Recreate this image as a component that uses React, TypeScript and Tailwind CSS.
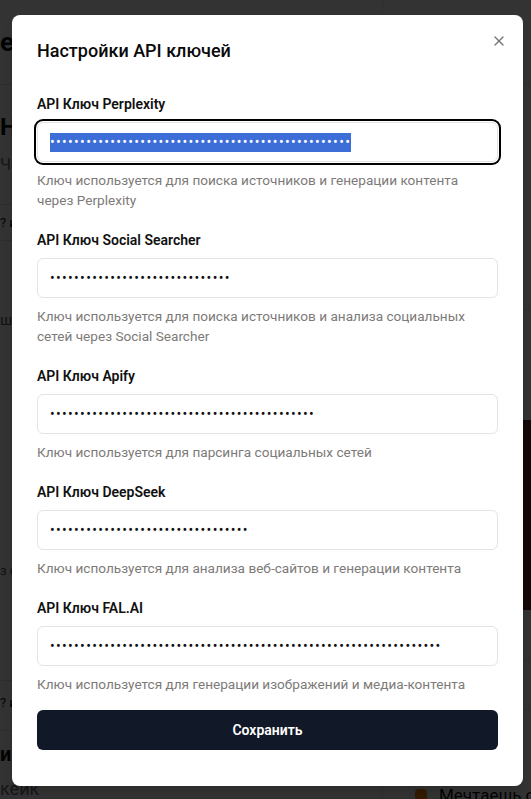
import { X } from 'lucide-react'

const keys = [
  {
    label: 'API Ключ Perplexity',
    dots: 50,
    hint: 'Ключ используется для поиска источников и генерации контента через Perplexity',
    focused: true,
  },
  {
    label: 'API Ключ Social Searcher',
    dots: 30,
    hint: 'Ключ используется для поиска источников и анализа социальных сетей через Social Searcher',
  },
  { label: 'API Ключ Apify', dots: 44, hint: 'Ключ используется для парсинга социальных сетей' },
  { label: 'API Ключ DeepSeek', dots: 33, hint: 'Ключ используется для анализа веб-сайтов и генерации контента' },
  { label: 'API Ключ FAL.AI', dots: 65, hint: 'Ключ используется для генерации изображений и медиа-контента' },
]

// page behind the dialog, only the edges show
function Backdrop() {
  return (
    <div className="grid h-full grid-cols-[383px_1fr] text-[#111]">
      <div className="flex flex-col border-r border-gray-200">
        <div className="flex h-[85px] items-center border-b border-gray-200 text-[26px] font-bold">ен</div>
        <div className="flex h-[120px] flex-col justify-center gap-3 border-b border-gray-200">
          <div className="text-[24px] font-bold leading-7">Н</div>
          <div className="text-[16px] text-gray-500">Че</div>
        </div>
        <div className="h-[36px] border-b border-gray-200 pt-2 text-[13px]">? и</div>
        <div className="h-[320px] pt-[68px] text-[15px] text-gray-600">ш</div>
        <div className="h-[120px] border-b border-gray-200 text-[13px] text-gray-600">з о</div>
        <div className="h-[50px] border-b border-gray-200 pt-3 text-[13px]">? и</div>
        <div className="h-[36px] pt-2 text-[20px] font-bold">из</div>
        <div className="pt-2 text-[18px] text-gray-500">кейк</div>
      </div>
      <div className="flex flex-col pl-3">
        <div className="flex h-[85px] items-center justify-end border-b border-gray-200 pr-1 text-[22px] font-bold">?</div>
        <div className="h-[135px]" />
        <div className="h-[90px] border-b border-gray-200 text-right text-[15px]">к</div>
        <div className="h-[110px] text-right text-[15px] leading-[22px]">
          <div>к</div>
          <div>а</div>
          <div>т</div>
          <div>ы</div>
        </div>
        <div className="h-[190px] bg-[#6b2a2a]" />
        <div className="h-[50px] border-b border-gray-200 pt-4 text-right text-[15px]">а</div>
        <div className="h-[50px] border-b border-gray-200 pt-3 text-right text-[15px]">к</div>
        <div className="h-[75px]" />
        <div className="flex items-center gap-3 whitespace-nowrap pl-5 text-[17px] leading-5">
          <span className="h-3 w-3 shrink-0 rounded-sm bg-orange-400" />
          Мечтаешь о вкусном
        </div>
      </div>
    </div>
  )
}

function KeyField({ label, dots, hint, focused }: { label: string; dots: number; hint: string; focused?: boolean }) {
  return (
    <div className="flex flex-col">
      <label className="text-[14px] font-semibold leading-5 text-[#111]">{label}</label>
      <div
        className={
          'mt-2 flex h-10 items-center rounded-md border border-[#e4e4e7] bg-white px-3 ' +
          (focused ? 'ring-2 ring-black ring-offset-1' : '')
        }
      >
        <span
          className={
            'text-[14px] leading-[19px] tracking-[1.3px] ' + (focused ? 'bg-[#3d6ed8] text-white' : 'text-[#111]')
          }
        >
          {'•'.repeat(dots)}
        </span>
      </div>
      <p className="mt-2 max-w-[440px] text-[13.6px] leading-5 text-[#7d7a78]">{hint}</p>
    </div>
  )
}

export default function App() {
  return (
    <div className="relative h-[799px] w-[531px] overflow-hidden bg-white font-['Roboto','Liberation_Sans',sans-serif]">
      <Backdrop />
      <div className="absolute inset-0 bg-black/80" />
      <div className="absolute left-[12px] top-[15px] w-[511px] rounded-lg bg-white px-[25px] pb-9 pt-[22px] shadow-lg">
        <h2 className="text-[18px] font-medium leading-7 text-[#0a0a0a]">Настройки API ключей</h2>
        <button className="absolute right-[16px] top-[18px] text-[#555] opacity-80">
          <X size={16} strokeWidth={2} />
        </button>
        <div className="mt-[29px] flex flex-col gap-5">
          {keys.map((k) => (
            <KeyField key={k.label} {...k} />
          ))}
        </div>
        <button className="mt-4 flex h-10 w-full items-center justify-center rounded-md bg-[#111827] text-[14px] font-semibold text-white">
          Сохранить
        </button>
      </div>
    </div>
  )
}
